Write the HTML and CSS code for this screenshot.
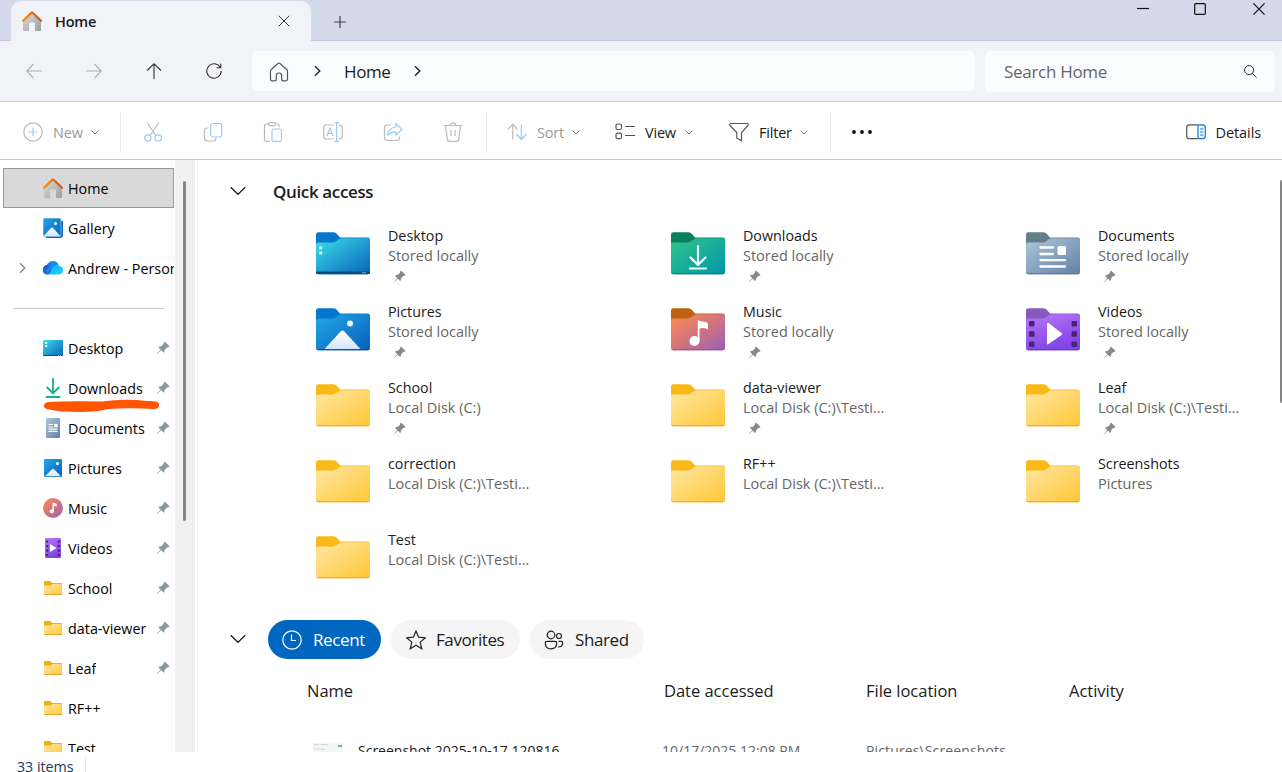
FILE: index.html
```html
<!DOCTYPE html>
<html lang="en">
<head>
<meta charset="utf-8">
<title>Home - File Explorer</title>
<link rel="stylesheet" href="styles.css">
</head>
<body>
<svg class="defs" width="0" height="0" aria-hidden="true">
  <defs>
    <linearGradient id="gDesk" x1="0" y1="0" x2="1" y2="1"><stop offset="0" stop-color="#3be0e4"/><stop offset=".5" stop-color="#219fd2"/><stop offset="1" stop-color="#0a64b8"/></linearGradient>
    <linearGradient id="gPic" x1="0" y1="0" x2="1" y2="1"><stop offset="0" stop-color="#24a8ea"/><stop offset="1" stop-color="#0560b8"/></linearGradient>
    <linearGradient id="gDown" x1="0" y1="0" x2="1" y2="1"><stop offset="0" stop-color="#31c48b"/><stop offset="1" stop-color="#0097a9"/></linearGradient>
    <linearGradient id="gMus" x1="0" y1="0" x2="1" y2="1"><stop offset="0" stop-color="#fb8d51"/><stop offset=".55" stop-color="#cf7280"/><stop offset="1" stop-color="#9560bd"/></linearGradient>
    <linearGradient id="gDoc" x1="0" y1="0" x2="1" y2="1"><stop offset="0" stop-color="#b0c5d9"/><stop offset="1" stop-color="#6081a5"/></linearGradient>
    <linearGradient id="gVid" x1="0" y1="0" x2=".4" y2="1"><stop offset="0" stop-color="#b879f8"/><stop offset="1" stop-color="#8244e5"/></linearGradient>
    <linearGradient id="gFold" x1="0" y1="0" x2="1" y2="1"><stop offset="0" stop-color="#ffe7a2"/><stop offset="1" stop-color="#ffc737"/></linearGradient>
    <linearGradient id="gMount" x1="0" y1="0" x2="0" y2="1"><stop offset="0" stop-color="#fff"/><stop offset="1" stop-color="#d5e4fb"/></linearGradient>
    <linearGradient id="gRoof" x1="0" y1="0" x2="1" y2="0"><stop offset="0" stop-color="#f58b13"/><stop offset="1" stop-color="#dc4a10"/></linearGradient>
    <linearGradient id="gWall" x1="0" y1="0" x2="1" y2="1"><stop offset="0" stop-color="#dedede"/><stop offset="1" stop-color="#9d9d9d"/></linearGradient>
    <linearGradient id="gCloud" x1="0" y1="0" x2="1" y2="1"><stop offset="0" stop-color="#079cf5"/><stop offset="1" stop-color="#22d4ff"/></linearGradient>
    <path id="tab" d="M0 2.6Q0 .3 2.4.3H17.500Q19.600.3 21 2L24 5.500H51.500Q54 5.500 54 8V14H0Z"/>
    <path id="front" d="M0 12.600Q0 10.500 2.100 10.500H16Q18.500 10.500 20.500 9L23.500 7Q24.600 6.300 26 6.300H52Q54 6.300 54 8.300V40Q54 42.300 51.700 42.300H2.300Q0 42.300 0 40Z"/>
    <path id="edge" d="M.1 40.300Q.5 42.300 2.300 42.300H51.700Q53.600 42.300 53.900 40.300Q53.200 41.300 51.700 41.300H2.300Q.8 41.300.1 40.300Z"/>
  </defs>
  <symbol id="f-plain" viewBox="0 0 54 43"><use href="#tab" fill="#f9b916"/><use href="#front" fill="url(#gFold)"/><use href="#edge" fill="#e5a32a"/></symbol>
  <symbol id="f-desktop" viewBox="0 0 54 43"><use href="#tab" fill="#0675cc"/><use href="#front" fill="url(#gDesk)"/><path d="M0 39.500H54V40.200Q54 42.300 51.700 42.300H2.300Q0 42.300 0 40.200Z" fill="#084b83"/><path d="M3.200 14.500h3v3h-3zM3.200 19.500h3v3h-3z" fill="#d5faf7"/><path d="M46 40.800h4" stroke="#9ac4dc" stroke-width=".8"/></symbol>
  <symbol id="f-pictures" viewBox="0 0 54 43"><use href="#tab" fill="#0675cc"/><use href="#front" fill="url(#gPic)"/><circle cx="34" cy="15.500" r="3" fill="#f4f9ff"/><path d="M8.500 41L24.600 23.500Q26.500 21.700 28.400 23.500L44.500 41Z" fill="url(#gMount)"/><use href="#edge" fill="#064f9c"/></symbol>
  <symbol id="f-downloads" viewBox="0 0 54 43"><use href="#tab" fill="#087f60"/><use href="#front" fill="url(#gDown)"/><path d="M27 14V32M19.500 25.500L27 33L34.500 25.500M19 36.500H35" fill="none" stroke="#f0fffb" stroke-width="2.200" stroke-linecap="round" stroke-linejoin="round"/><use href="#edge" fill="#04777f"/></symbol>
  <symbol id="f-music" viewBox="0 0 54 43"><use href="#tab" fill="#bd610f"/><use href="#front" fill="url(#gMus)"/><circle cx="23.500" cy="33" r="5" fill="#fff"/><path d="M26.800 33V12.500Q28 12.200 30 13.300L35.500 14.300Q37 15 37 17V21.500Q32 19 28.500 20.800V33Z" fill="#fff"/><use href="#edge" fill="#92558d"/></symbol>
  <symbol id="f-documents" viewBox="0 0 54 43"><use href="#tab" fill="#628087"/><use href="#front" fill="url(#gDoc)"/><path d="M14.500 15.500H27M14.500 22H27M14.500 28.200H39M14.500 34.500H39" stroke="#fff" stroke-width="2.300" stroke-linecap="round"/><rect x="31.500" y="14" width="8.500" height="9" rx="1.500" fill="#fff"/><use href="#edge" fill="#557391"/></symbol>
  <symbol id="f-videos" viewBox="0 0 54 43"><use href="#tab" fill="#865bbd"/><use href="#front" fill="url(#gVid)"/><path d="M3.500 13.500h4.500v4.500h-4.500zM3.500 23.700h4.500v4.500h-4.500zM3.500 34h4.500v4.500h-4.500zM46 13.500h4.500v4.500h-4.500zM46 23.700h4.500v4.500h-4.500zM46 34h4.500v4.500h-4.500z" fill="#482677" stroke="#482677" stroke-linejoin="round"/><path d="M21 16V35.500Q21 37 22.500 36L35.500 27Q36.700 26 35.500 25L22.500 15Q21 14.200 21 16Z" fill="#fff"/><use href="#edge" fill="#6735c0"/></symbol>

  <symbol id="home" viewBox="0 0 20 20"><path d="M1 9L10 1.200L19 9V19Q19 20 18 20H13V12.500Q13 11.500 12 11.500H8Q7 11.500 7 12.500V20H2Q1 20 1 19Z" fill="url(#gWall)"/><path d="M1 9.700L10 1.300L19 9.700" fill="none" stroke="url(#gRoof)" stroke-width="2.200" stroke-linecap="round" stroke-linejoin="round"/></symbol>
  <symbol id="gallery" viewBox="0 0 20 20"><path d="M18.500 2.500Q20 2.700 20 4V17Q20 20 17 20H4Q2.500 20 2.500 18.500Z" fill="#0b61b3"/><rect width="18" height="18.500" rx="1.500" fill="url(#gPic)" stroke="#fff" stroke-width=".5"/><circle cx="12.500" cy="5.500" r="1.500" fill="#fff"/><path d="M1 17.500L8 10Q9 9 10 10L17 17.500Q16.500 18 16 18H2Z" fill="url(#gMount)"/></symbol>
  <symbol id="cloud" viewBox="0 0 20 20"><path d="M5 16.500Q0 16.500 0 11.700Q0 7.700 4 7Q6 3.300 10 3.300Q15 3.300 16 8Q20 8.500 20 12.300Q20 16.500 15.600 16.500Z" fill="url(#gCloud)"/><path d="M4.300 16.500Q0 16.300 0 11.700Q0 7.700 4 7Q6 3.300 10 3.300Q13.500 3.300 15 6Q11 6.500 8.500 10.500Q7 16.500 4.300 16.500Z" fill="#1464d8"/><path d="M4 7Q6 3.300 10 3.300Q13.500 3.300 15 6Q10 6.500 7.300 12Q6 15 3 16.200Q2 12 7 8.500Z" fill="#21a7fb" opacity=".5"/></symbol>
  <symbol id="desktop" viewBox="0 0 20 20"><rect y="2" width="20" height="16" rx="1" fill="url(#gDesk)"/><path d="M0 17H20Q20 18 19 18H1Q0 18 0 17Z" fill="#084b83"/><path d="M2.200 4h2v1.800h-2zM2.200 7.200h2V9h-2z" fill="#fff"/><path d="M15 17.500h1m1 0h1" stroke="#fff" stroke-width=".6"/></symbol>
  <symbol id="download" viewBox="0 0 20 20"><path d="M10 .8V15M4.200 9.500L10 15.300L15.800 9.500" fill="none" stroke="#16ae91" stroke-width="1.800" stroke-linecap="round" stroke-linejoin="round"/><path d="M3.500 19H16.500" stroke="#16b384" stroke-width="1.800" stroke-linecap="round"/></symbol>
  <symbol id="document" viewBox="0 0 20 20"><rect x="3" width="14" height="20" rx="1" fill="url(#gDoc)"/><path d="M5.500 6.500H10M5.500 9H10M5.500 11.200H14.500M5.500 13.400H14.500" stroke="#fff" stroke-width="1.200"/><path d="M11.200 5.800h3.500v3.500h-3.500z" fill="#fff"/></symbol>
  <symbol id="picture" viewBox="0 0 20 20"><rect x="1" y="1" width="18" height="18" rx="1" fill="url(#gPic)"/><circle cx="14.500" cy="5.500" r="1.600" fill="#fff"/><path d="M2 18.300L9 11.200Q10 10.200 11 11.200L18 18.300Z" fill="url(#gMount)"/></symbol>
  <symbol id="music" viewBox="0 0 20 20"><circle cx="10" cy="10" r="10" fill="url(#gMus)"/><circle cx="8.800" cy="13.300" r="2.100" fill="#fff"/><path d="M9.500 4.500L13.800 5.800V8.500L11 7.800V13.300H9.500Z" fill="#fff"/></symbol>
  <symbol id="video" viewBox="0 0 20 20"><rect x="2" width="16" height="20" rx="1" fill="url(#gVid)"/><path d="M4.200 2.500V18.500M15.800 2.500V18.500" stroke="#3f1d72" stroke-width="2" stroke-dasharray="2 2.500"/><path d="M7 6V14L13.500 10Z" fill="#fff"/></symbol>
  <symbol id="folder" viewBox="0 0 20 20"><path d="M1 4Q1 3 2 3H7Q7.500 3 8 3.700L9.300 5H18Q19 5 19 6V16.500H1Z" fill="#f4af12"/><path d="M1 7.500H7Q8 7.500 9.500 6H18Q19 6 19 7V16Q19 17 18 17H2Q1 17 1 16Z" fill="url(#gFold)"/><path d="M1 16.500H19" stroke="#e3a32d"/></symbol>
  <symbol id="pin" viewBox="0 0 14 14"><path d="M8.900.7L13.300 5.100Q13.700 5.700 12.900 5.900L10.800 6.700L8.800 8.800L8.300 11.300Q8 12 7.400 11.500L5.200 9.300L1.300 13L.7 13.300L1 12.600L4.700 8.800L2.500 6.600Q2 6 2.700 5.700L5.200 5.200L7.300 3.200L8.100 1.100Q8.300.3 8.900.7Z"/></symbol>
  <symbol id="down" viewBox="0 0 16 10"><path d="M.7 1.200L8 8.300L15.300 1.200" fill="none" stroke="currentColor" stroke-width="1.200"/></symbol>
  <symbol id="chev" viewBox="0 0 8 5"><path d="M.6.6L4 4L7.400.6" fill="none" stroke="currentColor"/></symbol>
  <symbol id="right" viewBox="0 0 7 12"><path d="M1 1.200L5.800 6L1 10.800" fill="none" stroke="currentColor" stroke-width="1.400"/></symbol>
</svg>

<div class="window">
  <header class="titlebar">
    <div class="tab"><svg class="i20"><use href="#home"/></svg><span class="tab-title">Home</span>
      <svg class="tab-close" viewBox="0 0 12 12"><path d="M.8.8L11.200 11.200M11.200.8L.8 11.200"/></svg></div>
    <svg class="add" viewBox="0 0 12 12"><path d="M6 0V12M0 6H12"/></svg>
    <div class="controls">
      <svg viewBox="0 0 12 12"><path d="M0 5.500H12"/></svg>
      <svg viewBox="0 0 12 12"><rect x=".7" y=".7" width="10.600" height="10.600" rx="1"/></svg>
      <svg viewBox="0 0 12 12"><path d="M.4.4L11.600 11.600M11.600.4L.4 11.600"/></svg>
    </div>
  </header>

  <nav class="navbar">
    <div class="arrows">
      <svg class="off" viewBox="0 0 16 16"><path d="M16 8H1M7.500 1L.8 8L7.500 15"/></svg>
      <svg class="off" viewBox="0 0 16 16"><path d="M0 8H15M8.500 1L15.200 8L8.500 15"/></svg>
      <svg viewBox="0 0 16 16"><path d="M8 16V1M1 7.500L8 .8L15 7.500"/></svg>
      <svg viewBox="0 0 16 16"><path d="M14.300 4.500A7.200 7.200 0 1 0 15.200 8M14.800.5V4.800H10.500"/></svg>
    </div>
    <div class="address">
      <svg class="house" viewBox="0 0 20 20"><path d="M1.500 9.200Q1.500 8.200 2.300 7.500L9 1.500Q10 .7 11 1.500L17.700 7.500Q18.500 8.200 18.500 9.200V17Q18.500 18.800 16.700 18.800H14.300Q12.700 18.800 12.700 17.200V13.500Q12.700 11 10 11T7.300 13.500V17.200Q7.300 18.800 5.700 18.800H3.300Q1.500 18.800 1.500 17Z"/></svg>
      <svg class="crumb"><use href="#right"/></svg><span>Home</span><svg class="crumb last"><use href="#right"/></svg>
    </div>
    <div class="search"><span>Search Home</span><svg viewBox="0 0 14 14"><circle cx="5.500" cy="5.500" r="4.900"/><path d="M9 9L13.500 13.500"/></svg></div>
  </nav>

  <div class="toolbar">
    <div class="tool new off"><svg class="i20 ln" viewBox="0 0 20 20"><circle cx="10" cy="10" r="9.200"/><path class="bl" d="M10 5.500V14.500M5.500 10H14.500"/></svg><span>New</span><svg class="chev"><use href="#chev"/></svg></div>
    <i class="rule"></i>
    <div class="icons off">
      <svg class="i20 ln" viewBox="0 0 20 20"><path d="M4.200.5L12.800 13.500M15.800.5L7.200 13.500"/><circle class="bl" cx="4.800" cy="16" r="3.200"/><circle class="bl" cx="15.200" cy="16" r="3.200"/></svg>
      <svg class="i20 ln" viewBox="0 0 20 20"><path d="M5.500 6H4Q1.500 6 1.500 8.500V16Q1.500 19 4.500 19H10Q13 19 13 16"/><rect class="bl" x="7.700" y="1.500" width="11" height="13.500" rx="2.200"/></svg>
      <svg class="i20 ln" viewBox="0 0 20 20"><path d="M6.500 2H3.500Q1.500 2 1.500 4V17.500Q1.500 19.300 3.500 19.300H7M12.500 2H14Q16 2 16 4V5"/><rect x="5.500" y=".7" width="7" height="3" rx="1.500"/><rect class="bl" x="9" y="7" width="9.500" height="12.300" rx="1.500"/></svg>
      <svg class="i20 ln" viewBox="0 0 20 20"><path d="M11 3H3.500Q.7 3 .7 5.800V14.200Q.7 17 3.500 17H11M16 3.100Q19.300 3.200 19.300 6V14Q19.300 16.800 16 16.900"/><path class="bl" d="M3.800 14L7 6L10.200 14M5 11.500H9M11.500.7H16M13.700.7V19.300M11.500 19.300H16"/></svg>
      <svg class="i20 ln" viewBox="0 0 20 20"><path d="M8 3H4Q1.500 3 1.500 5.500V15.500Q1.500 18.500 4.500 18.500H14Q16.500 18.500 16.500 16V14.500"/><path class="bl" d="M12.800 1.500L19 7.500L12.800 13V9.800Q8 9.500 4.700 13Q5.500 6 12.800 5Z"/></svg>
      <svg class="i20 ln" viewBox="0 0 20 20"><path d="M.8 3.500H19.200M2.500 3.500L4.300 17Q4.500 19.300 6.500 19.300H13.500Q15.500 19.300 15.700 17L17.500 3.500M7.300 3Q7.300.8 10 .8T12.700 3M8 8V14M12 8V14"/></svg>
    </div>
    <i class="rule"></i>
    <div class="tool sort off"><svg class="i20 ln" viewBox="0 0 20 20"><path d="M5.800 17.500V2.500M.8 7.500L5.800 2.200L10.500 7.500"/><path class="bl" d="M14.300 2.500V17M9.300 12L14.300 17.500L19.300 12"/></svg><span>Sort</span><svg class="chev"><use href="#chev"/></svg></div>
    <div class="tool view"><svg class="i20 ln" viewBox="0 0 20 20"><rect x="1" y="2" width="5.500" height="5.500" rx="1.500"/><rect x="1" y="11.200" width="5.500" height="5.500" rx="1.500"/><path d="M10 4.500H20M10 13.500H20"/></svg><span>View</span><svg class="chev"><use href="#chev"/></svg></div>
    <div class="tool filter"><svg class="i20 ln" viewBox="0 0 20 20"><path d="M1.800 1.500H18.200Q19.300 1.500 19.300 2.500Q19.300 3.300 18.500 4L12.500 10.700V18.800L7.800 16V10.700L1.500 4Q.7 3.300.7 2.500T1.800 1.500Z"/></svg><span>Filter</span><svg class="chev"><use href="#chev"/></svg></div>
    <i class="rule"></i>
    <svg class="more" viewBox="0 0 20 4"><circle cx="2" cy="2" r="1.900"/><circle cx="10" cy="2" r="1.900"/><circle cx="18" cy="2" r="1.900"/></svg>
    <div class="tool details"><svg class="i20 ln" viewBox="0 0 20 20"><path d="M11.500 2.800H3.500Q.7 2.800.7 5.600V13.900Q.7 16.700 3.500 16.700H11.500"/><path class="bl" d="M12 2.800H16.500Q19.300 2.800 19.300 5.600V13.900Q19.300 16.700 16.500 16.700H12ZM14 7H17.500M14 10H17.500M14 13H17.500"/></svg><span>Details</span></div>
  </div>

  <div class="body">
    <aside class="side">
      <div class="row active"><svg class="i20"><use href="#home"/></svg><span>Home</span></div>
      <div class="row"><svg class="i20"><use href="#gallery"/></svg><span>Gallery</span></div>
      <div class="row tree"><svg class="expand"><use href="#right"/></svg><svg class="i20"><use href="#cloud"/></svg><span>Andrew - Personal</span></div>
      <hr>
      <div class="row"><svg class="i20"><use href="#desktop"/></svg><span>Desktop</span><svg class="pin"><use href="#pin"/></svg></div>
      <div class="row marked"><svg class="i20"><use href="#download"/></svg><span>Downloads</span><svg class="pin"><use href="#pin"/></svg>
        <svg class="marker" viewBox="0 0 116 14"><path d="M0 7Q0 3.500 5 3Q20 2 58 2.500Q80-.5 103 2Q116 1.500 115 6Q115 10 110 10Q85 8.500 64 10Q55 13 36 13Q15 13 5 10.500Q0 9.500 0 7Z"/></svg></div>
      <div class="row"><svg class="i20"><use href="#document"/></svg><span>Documents</span><svg class="pin"><use href="#pin"/></svg></div>
      <div class="row"><svg class="i20"><use href="#picture"/></svg><span>Pictures</span><svg class="pin"><use href="#pin"/></svg></div>
      <div class="row"><svg class="i20"><use href="#music"/></svg><span>Music</span><svg class="pin"><use href="#pin"/></svg></div>
      <div class="row"><svg class="i20"><use href="#video"/></svg><span>Videos</span><svg class="pin"><use href="#pin"/></svg></div>
      <div class="row"><svg class="i20"><use href="#folder"/></svg><span>School</span><svg class="pin"><use href="#pin"/></svg></div>
      <div class="row"><svg class="i20"><use href="#folder"/></svg><span>data-viewer</span><svg class="pin"><use href="#pin"/></svg></div>
      <div class="row"><svg class="i20"><use href="#folder"/></svg><span>Leaf</span><svg class="pin"><use href="#pin"/></svg></div>
      <div class="row"><svg class="i20"><use href="#folder"/></svg><span>RF++</span></div>
      <div class="row"><svg class="i20"><use href="#folder"/></svg><span>Test</span></div>
    </aside>
    <div class="side-scroll"><div class="thumb"></div></div>

    <main class="main">
      <div class="section"><svg class="down"><use href="#down"/></svg><h2>Quick access</h2></div>
      <div class="grid">
        <div class="card"><svg class="big"><use href="#f-desktop"/></svg><div><b>Desktop</b><p>Stored locally</p><svg class="pin"><use href="#pin"/></svg></div></div>
        <div class="card"><svg class="big"><use href="#f-downloads"/></svg><div><b>Downloads</b><p>Stored locally</p><svg class="pin"><use href="#pin"/></svg></div></div>
        <div class="card"><svg class="big"><use href="#f-documents"/></svg><div><b>Documents</b><p>Stored locally</p><svg class="pin"><use href="#pin"/></svg></div></div>
        <div class="card"><svg class="big"><use href="#f-pictures"/></svg><div><b>Pictures</b><p>Stored locally</p><svg class="pin"><use href="#pin"/></svg></div></div>
        <div class="card"><svg class="big"><use href="#f-music"/></svg><div><b>Music</b><p>Stored locally</p><svg class="pin"><use href="#pin"/></svg></div></div>
        <div class="card"><svg class="big"><use href="#f-videos"/></svg><div><b>Videos</b><p>Stored locally</p><svg class="pin"><use href="#pin"/></svg></div></div>
        <div class="card"><svg class="big"><use href="#f-plain"/></svg><div><b>School</b><p>Local Disk (C:)</p><svg class="pin"><use href="#pin"/></svg></div></div>
        <div class="card"><svg class="big"><use href="#f-plain"/></svg><div><b>data-viewer</b><p>Local Disk (C:)\Testi...</p><svg class="pin"><use href="#pin"/></svg></div></div>
        <div class="card"><svg class="big"><use href="#f-plain"/></svg><div><b>Leaf</b><p>Local Disk (C:)\Testi...</p><svg class="pin"><use href="#pin"/></svg></div></div>
        <div class="card"><svg class="big"><use href="#f-plain"/></svg><div><b>correction</b><p>Local Disk (C:)\Testi...</p></div></div>
        <div class="card"><svg class="big"><use href="#f-plain"/></svg><div><b>RF++</b><p>Local Disk (C:)\Testi...</p></div></div>
        <div class="card"><svg class="big"><use href="#f-plain"/></svg><div><b>Screenshots</b><p>Pictures</p></div></div>
        <div class="card"><svg class="big"><use href="#f-plain"/></svg><div><b>Test</b><p>Local Disk (C:)\Testi...</p></div></div>
      </div>
      <div class="pills">
        <svg class="down"><use href="#down"/></svg>
        <div class="pill recent"><svg class="i20" viewBox="0 0 20 20"><circle cx="10" cy="10" r="9.200"/><path d="M9.500 4.500V10.500H14"/></svg><span>Recent</span></div>
        <div class="pill fav"><svg class="i20" viewBox="0 0 20 20"><path d="M10 1L12.600 7.200L19.300 7.700L14.200 12.100L15.800 18.800L10 15.300L4.200 18.800L5.800 12.100L.7 7.700L7.400 7.200Z"/></svg><span>Favorites</span></div>
        <div class="pill shared"><svg class="i20" viewBox="0 0 20 20"><circle cx="7" cy="5" r="3.800"/><circle cx="15" cy="6" r="2.500"/><path d="M3 11.300H11Q12.700 11.300 12.700 13Q12.700 18.800 7 18.800T1.300 13Q1.300 11.300 3 11.300ZM14.500 11.300H17.200Q18.700 11.300 18.700 13Q18.700 17 14 17"/></svg><span>Shared</span></div>
      </div>
      <div class="cols head"><span>Name</span><span>Date accessed</span><span>File location</span><span>Activity</span></div>
      <div class="cols file"><div class="name"><svg class="thumbnail" viewBox="0 0 30 20"><path d="M0 0H30V20H0Z" fill="#f3f6f7"/><path d="M1 1.500H6M8 1.500H15M1 6H12" stroke="#cfd9de"/><path d="M25 2H29V4H25Z" fill="#72b28c"/></svg><span>Screenshot 2025-10-17 120816</span></div><span class="date">10/17/2025 12:08 PM</span><span class="place">Pictures\Screenshots</span></div>
    </main>
    <div class="main-thumb"></div>
  </div>
  <footer class="status"><span>33 items</span></footer>
</div>
</body>
</html>
```
FILE: styles.css
```css
* { box-sizing: border-box; }
body { margin: 0; overflow: hidden; font-family: "Open Sans", "Noto Sans", sans-serif; font-size: 14px; color: #1b1b1b; background: #fff; }
svg { display: block; flex: none; }
.defs { position: absolute; }
.i20 { width: 20px; height: 20px; }
.window { width: 1282px; height: 772px; display: flex; flex-direction: column; }

.titlebar { height: 41px; background: #d5daea; border-bottom: 1px solid #c7cbdf; display: flex; padding-left: 11px; flex: none; }
.tab { width: 300px; height: 40px; margin-top: 1px; background: #f2f3f9; border-radius: 10px 10px 0 0; display: flex; align-items: center; padding: 0 21px 0 11px; }
.tab-title { font-weight: 600; font-size: 14.5px; margin-left: 13px; flex: 1; letter-spacing: -.2px; }
.tab-close { width: 12px; height: 12px; stroke: #333; fill: none; }
.add { width: 12px; height: 12px; margin: 16px 0 0 23px; stroke: #444; stroke-width: 1.200; }
.controls { margin-left: auto; display: flex; gap: 46px; padding: 3px 17px 0 0; }
.controls svg { width: 12px; height: 12px; fill: none; stroke: #111; stroke-width: 1.200; }
.controls svg:nth-child(-n+2) { margin-left: -1px; margin-right: 1px; }
.controls svg:nth-child(2) { margin-left: -2px; }

.navbar { height: 61px; background: #f2f3f9; border-bottom: 1px solid #c3c7d8; display: flex; align-items: flex-start; padding-top: 10px; flex: none; font-size: 17px; }
.arrows { width: 252px; display: flex; gap: 44px; padding: 12px 0 0 26px; }
.arrows svg { width: 16px; height: 16px; fill: none; stroke: #333; stroke-width: 1.100; }
.arrows .off { stroke: #aaacb2; }
.address { width: 723px; height: 40px; border-radius: 6px; background: #fbfcfe; display: flex; align-items: center; padding-left: 17px; }
.address span { width: 47px; letter-spacing: -.4px; white-space: nowrap; }
.house { width: 20px; height: 20px; fill: none; stroke: #555; stroke-width: 1.200; margin-top: 2px; }
.crumb { width: 7px; height: 12px; margin: 0 23px 0 25px; color: #222; }
.crumb.last { margin-right: 0; margin-left: 23px; }
.search { width: 290px; height: 41px; margin-left: 10px; border-radius: 6px; background: #fbfcfe; display: flex; align-items: center; justify-content: space-between; padding: 0 18px 0 19px; color: #666; }
.search svg { width: 13px; height: 13px; fill: none; stroke: #222; }
.search span { letter-spacing: -.3px; }

.toolbar { height: 58px; border-bottom: 1px solid #c3c7d8; display: flex; align-items: center; padding: 3px 21px 0 0; flex: none; font-size: 14.500px; }
.tool { display: flex; align-items: center; gap: 10px; white-space: nowrap; letter-spacing: -.2px; }
.tool span { padding-top: 1px; }
.ln { fill: none; stroke: #555; stroke-width: 1.200; stroke-linejoin: round; }
.off { color: #999; }
.off .ln { stroke: #bbb; }
.off .bl { stroke: #9acbf3; }
.bl { stroke: #0a78d0; }
.chev { width: 8px; height: 5px; color: #777; margin-left: -2px; }
.rule { width: 1px; height: 40px; background: #ebebeb; flex: none; }
.new { width: 120px; padding-left: 23px; }
.new span { width: 30px; }
.icons { display: flex; gap: 40px; width: 365px; padding-left: 22px; }
.sort { width: 128px; padding-left: 20px; }
.sort span { width: 27px; }
.view { width: 114px; }
.view span { width: 32px; }
.filter { width: 101px; }
.filter span { width: 33px; }
.more { width: 20px; height: 4px; margin-left: 21px; fill: #111; }
.details { margin-left: auto; letter-spacing: -.1px; }

.body { height: 592px; display: flex; position: relative; overflow: hidden; flex: none; }
.side { width: 175px; padding-top: 8px; overflow: hidden; color: #000; font-size: 14.300px; }
.row { height: 40px; display: flex; align-items: center; padding: 0 5px 0 43px; position: relative; white-space: nowrap; }
.row span { margin-left: 5px; overflow: hidden; letter-spacing: .03px; line-height: 22px; padding-top: 1px; }
.row .pin { margin-left: auto; }
.active { background: #d9d9d9; border: 1px solid #999; margin: 0 1px 0 3px; padding-left: 39px; }
.tree { padding: 0 1px 0 19px; }
.tree .i20 { margin-left: 17px; }
.expand { width: 7px; height: 12px; color: #888; }
.side hr { border: 0; height: 1px; background: #ccc; margin: 20px 11px 19px 13px; }
.pin { width: 14px; height: 14px; fill: #8d979e; }
.marker { position: absolute; left: 44px; top: 31px; width: 116px; height: 14px; fill: #ff5400; z-index: 1; }
.side-scroll { width: 20px; background: #f0f0f0; padding: 21px 0 0 8px; flex: none; }
.thumb { width: 3px; height: 340px; border-radius: 2px; background: #868686; }

.main { width: 1085px; margin-left: 2px; border-left: 1px solid #f3f3f3; overflow: hidden; height: 592px; }
.section { height: 66px; display: flex; align-items: center; padding: 0 0 3px 32px; }
.down { width: 16px; height: 10px; margin-bottom: 1px; }
.section h2 { font-size: 17px; font-weight: 600; margin: 0 0 0 27px; letter-spacing: -.36px; }
.grid { display: grid; grid-template-columns: repeat(3, 355px); grid-auto-rows: 76px; padding-left: 118px; }
.card { display: flex; }
.big { width: 54px; height: 43px; margin: 6px 18px 0 0; }
.card b, .card p { display: block; font-weight: 400; margin: 0; line-height: 20px; white-space: nowrap; font-size: 14.300px; }
.card p { color: #666; font-size: 14.500px; }
.card .pin { width: 13px; height: 13px; margin: 4px 0 0 5px; fill: #888; }
.pills { display: flex; align-items: center; gap: 10px; height: 39px; padding-left: 32px; margin-top: 14px; font-size: 17px; }
.pills .down { margin-right: 12px; }
.pill { height: 39px; border-radius: 20px; background: #f5f5f5; display: flex; align-items: center; padding-left: 14px; letter-spacing: -.4px; }
.pill svg { fill: none; stroke: #222; stroke-width: 1.200; margin-right: 11px; }
.recent { width: 113px; background: #0067c0; color: #fff; }
.recent svg { stroke: #fff; }
.fav { width: 129px; padding-left: 15px; }
.fav svg { margin-right: 10px; }
.shared { width: 114px; }
.cols { display: grid; grid-template-columns: 357px 202px 203px 200px; padding-left: 109px; white-space: nowrap; }
.head { font-size: 16.500px; line-height: 24px; margin-top: 20px; letter-spacing: -.02px; }
.file { font-size: 14px; line-height: 20px; margin-top: 38px; color: #666; }
.date { margin-left: -2px; }
.place { letter-spacing: .13px; }
.name { display: flex; color: #1b1b1b; padding-left: 6px; }
.thumbnail { width: 30px; height: 20px; margin: 2px 15px 0 0; }
.main-thumb { position: absolute; right: 0; top: 20px; width: 2px; height: 223px; background: #858585; border-radius: 2px 0 0 2px; }

.status { height: 20px; padding: 4px 0 0 17px; color: #24375e; font-size: 14.300px; line-height: 22px; overflow: hidden; }
.status span { display: inline-block; padding-right: 12px; border-right: 1px solid #e8e8e8; letter-spacing: -.05px; }
```
